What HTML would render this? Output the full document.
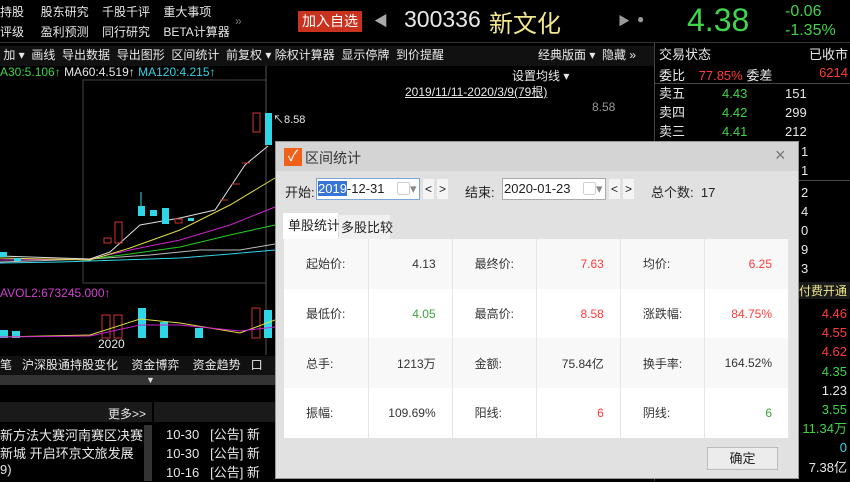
<!DOCTYPE html>
<html><head><meta charset="utf-8"><style>
*{margin:0;padding:0;box-sizing:border-box}
body{width:850px;height:481px;background:#000;overflow:hidden;position:relative;font-family:"Liberation Sans","Noto Sans CJK SC",sans-serif;font-size:12px;color:#ccc}
.a{position:absolute;white-space:nowrap}
.g{color:#3fd44a}.r{color:#ff3b3b}.c{color:#2fd6e6}.w{color:#e8e8e8}.y{color:#f0e68c}
.dlg{position:absolute;left:275px;top:141px;width:524px;height:338px;background:#e1e1e1;border:1px solid #999;color:#222}
table{border-collapse:collapse;position:absolute;left:8px;top:97px;width:505px;background:#fff}
td{height:49.7px;border-right:1px solid #e6e6e6;font-size:12px;color:#333;width:84px}
td.l{padding-left:22px}td.v{text-align:right;padding-right:16px}
tr:nth-child(odd) td{background:#f8f8f8}
</style></head><body>
<!-- chart -->
<svg class="a" style="left:0;top:0" width="280" height="360">
<rect x="83" y="80" width="183" height="203" fill="none" stroke="#444"/>
<line x1="266" y1="62" x2="266" y2="355" stroke="#555"/>
<polyline points="0,263 60,262 120,260 180,258 230,254 275,250" fill="none" stroke="#2fd6e6"/>
<polyline points="0,262 90,259 150,255 200,250 240,250 275,244" fill="none" stroke="#bbb"/>
<polyline points="0,260 90,259 130,254 180,247 230,235 275,225" fill="none" stroke="#2c2"/>
<polyline points="0,260 90,259 130,250 180,240 230,225 275,207" fill="none" stroke="#c2c"/>
<polyline points="0,258 90,260 130,248 180,230 230,205 275,178" fill="none" stroke="#dd4"/>
<polyline points="0,256 90,259 110,252 140,225 180,218 215,210 245,165 268,146" fill="none" stroke="#ddd"/>
<rect x="138" y="206" width="7" height="10" fill="#2fd6e6"/><rect x="150" y="210" width="7" height="6" fill="#2fd6e6"/><rect x="162" y="208" width="7" height="16" fill="#2fd6e6"/>
<line x1="141" y1="192" x2="141" y2="206" stroke="#2fd6e6"/>
<rect x="115" y="222" width="7" height="21" fill="none" stroke="#c33"/><rect x="104" y="238" width="7" height="5" fill="none" stroke="#c33"/>
<rect x="175" y="219" width="7" height="4" fill="none" stroke="#c33"/><rect x="188" y="218" width="6" height="3" fill="#2fd6e6"/>
<rect x="0" y="252" width="7" height="5" fill="#2fd6e6"/><rect x="14" y="258" width="7" height="3" fill="#2fd6e6"/>
<line x1="220" y1="200" x2="228" y2="200" stroke="#c33"/><line x1="232" y1="184" x2="240" y2="184" stroke="#c33"/><line x1="242" y1="163" x2="250" y2="163" stroke="#c33"/>
<rect x="253" y="113" width="7" height="19" fill="none" stroke="#c33"/><rect x="265" y="113" width="7" height="32" fill="#2fd6e6"/>
</svg>
<!-- top bar -->
<div class="a w" style="left:0;top:3px;font-size:12px">持股&nbsp;&nbsp;&nbsp;&nbsp;&nbsp;股东研究&nbsp;&nbsp;&nbsp;&nbsp;千股千评&nbsp;&nbsp;&nbsp;&nbsp;重大事项</div>
<div class="a w" style="left:0;top:23px;font-size:12px">评级&nbsp;&nbsp;&nbsp;&nbsp;&nbsp;盈利预测&nbsp;&nbsp;&nbsp;&nbsp;同行研究&nbsp;&nbsp;&nbsp;&nbsp;BETA计算器</div>
<div class="a" style="left:235px;top:14px;color:#777">»</div>
<div class="a" style="left:298px;top:11px;width:64px;height:21px;background:#c8321e;color:#fff;font-size:14px;text-align:center;line-height:21px">加入自选</div>
<div class="a" style="left:374px;top:11px;color:#aaa;font-size:14px">◀</div>
<div class="a w" style="left:404px;top:6px;font-size:23px">300336</div>
<div class="a y" style="left:489px;top:4px;font-size:24px">新文化</div>
<div class="a" style="left:618px;top:12px;color:#999;font-size:12px">▶</div>
<div class="a" style="left:637px;top:12px;color:#999;font-size:12px">●</div>
<div class="a g" style="left:687px;top:2px;font-size:32px">4.38</div>
<div class="a g" style="left:785px;top:3px;font-size:16px">-0.06</div>
<div class="a g" style="left:785px;top:22px;font-size:16px">-1.35%</div>
<div class="a" style="left:0;top:42px;width:850px;height:1px;background:#333"></div>
<!-- toolbar 2 -->
<div class="a w" style="left:0;top:46px;width:654px;height:20px;background:#111;font-size:12px;line-height:18px">&nbsp;加 ▾&nbsp; 画线 &nbsp;导出数据&nbsp; 导出图形&nbsp; 区间统计&nbsp; 前复权 ▾ 除权计算器&nbsp; 显示停牌&nbsp; 到价提醒<span style="position:absolute;left:538px">经典版面 ▾&nbsp;&nbsp;隐藏 »</span></div>
<div class="a" style="left:0;top:65px;font-size:12px"><span class="g">A30:5.106↑</span> <span class="w">MA60:4.519↑</span> <span class="c">MA120:4.215↑</span></div>
<div class="a w" style="left:512px;top:67px">设置均线 ▾</div>
<div class="a w" style="left:405px;top:83px;text-decoration:underline">2019/11/11-2020/3/9(79根)</div>
<div class="a" style="left:592px;top:100px;color:#999">8.58</div>
<div class="a w" style="left:273px;top:111px;font-size:11px">↖8.58</div>
<div class="a" style="left:0;top:286px;color:#d040d0">AVOL2:673245.000↑</div>
<svg class="a" style="left:0;top:305px" width="275" height="35">
<rect x="0" y="25" width="8" height="8" fill="#2fd6e6"/><rect x="12" y="26" width="8" height="7" fill="#2fd6e6"/>
<rect x="102" y="10" width="8" height="23" fill="none" stroke="#c33"/><rect x="114" y="10" width="8" height="23" fill="none" stroke="#c33"/>
<rect x="138" y="3" width="8" height="30" fill="#2fd6e6"/><rect x="160" y="17" width="8" height="16" fill="#2fd6e6"/>
<rect x="195" y="23" width="8" height="10" fill="#2fd6e6"/><rect x="252" y="3" width="8" height="30" fill="none" stroke="#c33"/><rect x="264" y="5" width="8" height="28" fill="#2fd6e6"/>
<polyline points="0,32 90,30 140,14 180,18 240,28 275,15" fill="none" stroke="#dd4"/>
<polyline points="0,32 90,31 140,20 180,20 240,26 275,22" fill="none" stroke="#c2c"/>
</svg>
<div class="a w" style="left:98px;top:337px;font-size:12px">2020</div>
<div class="a w" style="left:0;top:356px;width:275px;height:19px;background:#111;line-height:19px">笔&nbsp;&nbsp; 沪深股通持股变化&nbsp;&nbsp;&nbsp; 资金博弈&nbsp;&nbsp;&nbsp; 资金趋势&nbsp;&nbsp; 口</div>
<div class="a" style="left:0;top:375px;width:275px;height:10px;background:#333;color:#ddd;font-size:9px;line-height:10px;padding-left:146px">▼</div>
<div class="a" style="left:0;top:402px;width:152px;height:20px;background:#1a1a1a"></div>
<div class="a" style="left:154px;top:402px;width:121px;height:20px;background:#1a1a1a"></div>
<div class="a w" style="left:108px;top:405px">更多&gt;&gt;</div>
<div class="a w" style="left:0;top:425px;font-size:13px">新方法大赛河南赛区决赛</div>
<div class="a w" style="left:0;top:443px;font-size:13px">新城 开启环京文旅发展<br>9)</div>
<div class="a" style="left:144px;top:425px;width:8px;height:56px;background:#333"></div>
<div class="a w" style="left:166px;top:425px;font-size:13px;line-height:19px">10-30&nbsp;&nbsp; [公告] 新<br>10-30&nbsp;&nbsp; [公告] 新<br>10-16&nbsp;&nbsp; [公告] 新</div>
<!-- right panel -->
<div class="a" style="left:654px;top:43px;width:1px;height:438px;background:#444"></div>
<div class="a w" style="left:659px;top:44px;width:191px;font-size:13px">交易状态<span style="position:absolute;right:2px">已收市</span></div>
<div class="a w" style="left:659px;top:65px;width:191px;font-size:13px">委比 <span class="r" style="margin-left:10px">77.85%</span> 委差<span class="r" style="position:absolute;right:2px">6214</span></div>
<div class="a" style="left:655px;top:83px;width:195px;height:1px;background:#444"></div>
<div class="a w" style="left:659px;top:84px;font-size:13px;line-height:19px">卖五<br>卖四<br>卖三</div>
<div class="a g" style="left:722px;top:84px;font-size:13px;line-height:19px">4.43<br>4.42<br>4.41</div>
<div class="a w" style="left:785px;top:84px;font-size:13px;line-height:19px">151<br>299<br>212</div>
<div class="a w" style="left:801px;top:142px;font-size:13px;line-height:19px">1<br>1</div>
<div class="a" style="left:799px;top:180px;width:51px;height:1px;background:#444"></div>
<div class="a w" style="left:801px;top:183px;font-size:13px;line-height:19px">2<br>4<br>0<br>9<br>3</div>
<div class="a y" style="left:799px;top:282px;font-size:12px;background:#1a1a1a;width:51px">付费开通</div>
<div class="a" style="right:3px;top:304px;font-size:13px;line-height:19.2px;text-align:right"><span class="r">4.46</span><br><span class="r">4.55</span><br><span class="r">4.62</span><br><span class="g">4.35</span><br><span class="w">1.23</span><br><span class="g">3.55</span><br><span class="g">11.34万</span><br><span class="c">0</span><br><span class="w">7.38亿</span></div>
<!-- dialog -->
<div class="dlg">
<div style="position:absolute;left:0;top:0;width:522px;height:29px;background:#d4d4d4"></div>
<div class="a" style="left:8px;top:6px;width:18px;height:18px;background:#f06018;color:#fff;font-size:15px;line-height:18px;text-align:center">✓</div>
<div class="a" style="left:29px;top:6px;font-size:14px;color:#333">区间统计</div>
<div class="a" style="left:499px;top:3px;font-size:18px;color:#777">×</div>
<div class="a" style="left:9px;top:40px;font-size:13px">开始:</div>
<div class="a" style="left:40px;top:36px;width:104px;height:22px;background:#fff;border:1px solid #7aa7d8;font-size:13px;line-height:20px;padding-left:1px"><span style="background:#3875d7;color:#fff">2019</span>-12-31 <span style="color:#888;position:absolute;left:80px">▢▾</span></div>
<div class="a" style="left:147px;top:37px;width:11px;height:20px;background:#f4f4f4;font-size:12px;text-align:center;line-height:20px">&lt;</div>
<div class="a" style="left:161px;top:37px;width:11px;height:20px;background:#f4f4f4;font-size:12px;text-align:center;line-height:20px">&gt;</div>
<div class="a" style="left:189px;top:40px;font-size:13px">结束:</div>
<div class="a" style="left:226px;top:36px;width:104px;height:22px;background:#fff;border:1px solid #aaa;font-size:13px;line-height:20px;padding-left:1px">2020-01-23 <span style="color:#888;position:absolute;left:80px">▢▾</span></div>
<div class="a" style="left:333px;top:37px;width:11px;height:20px;background:#f4f4f4;font-size:12px;text-align:center;line-height:20px">&lt;</div>
<div class="a" style="left:347px;top:37px;width:11px;height:20px;background:#f4f4f4;font-size:12px;text-align:center;line-height:20px">&gt;</div>
<div class="a" style="left:375px;top:40px;font-size:13px">总个数:&nbsp; 17</div>
<div class="a" style="left:7px;top:71px;width:55px;height:26px;background:#fff;font-size:13px;line-height:26px;padding-left:5px">单股统计</div>
<div class="a" style="left:63px;top:73px;width:51px;height:24px;background:#f0f0f0;font-size:13px;line-height:26px;padding-left:2px">多股比较</div>
<table>
<tr><td class="l">起始价:</td><td class="v">4.13</td><td class="l">最终价:</td><td class="v r">7.63</td><td class="l">均价:</td><td class="v r">6.25</td></tr>
<tr><td class="l">最低价:</td><td class="v g" style="color:#3aa43a">4.05</td><td class="l">最高价:</td><td class="v r">8.58</td><td class="l">涨跌幅:</td><td class="v r">84.75%</td></tr>
<tr><td class="l">总手:</td><td class="v">1213万</td><td class="l">金额:</td><td class="v">75.84亿</td><td class="l">换手率:</td><td class="v">164.52%</td></tr>
<tr><td class="l">振幅:</td><td class="v">109.69%</td><td class="l">阳线:</td><td class="v r">6</td><td class="l">阴线:</td><td class="v" style="color:#3aa43a">6</td></tr>
</table>
<div class="a" style="left:431px;top:305px;width:71px;height:23px;background:#ececec;border:1px solid #bbb;font-size:13px;text-align:center;line-height:21px">确定</div>
</div>
</body></html>
